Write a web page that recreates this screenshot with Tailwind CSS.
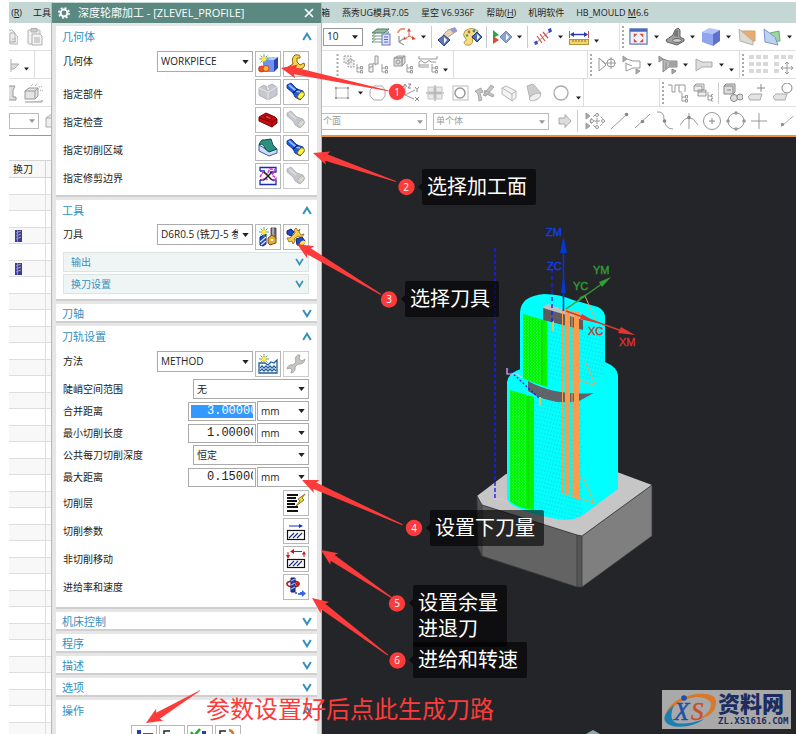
<!DOCTYPE html>
<html lang="zh-CN">
<head>
<meta charset="utf-8">
<title>深度轮廓加工</title>
<script src="https://cdn.jsdelivr.net/npm/@tailwindcss/browser@4"></script>
</head>
<body class="relative h-screen overflow-hidden bg-white font-['Open_Sans','Noto_Sans_CJK_SC',sans-serif] text-[10px] text-[#222]">

<svg class="hidden" aria-hidden="true">
  <symbol id="caret" viewBox="0 0 8 5"><path d="M0 0H8L4 5z" fill="currentColor"/></symbol>
  <symbol id="up" viewBox="0 0 10 9"><path d="M1.2 8L5 1.8L8.800 8" fill="none" stroke="#3290bd" stroke-width="2"/></symbol>
  <symbol id="down" viewBox="0 0 10 9"><path d="M1.200 1L5 7.200L8.800 1" fill="none" stroke="#3290bd" stroke-width="2"/></symbol>
  <symbol id="grip" viewBox="0 0 4 22"><path d="M2 0V22" stroke="#aaa" stroke-width="2" stroke-dasharray="2 2"/></symbol>
  <symbol id="torch" viewBox="0 0 20 20"><path d="M1 3L5 1L11 7L17 9L18 14L14 18L9 15L7 11L1 6z" fill="#1f5ae0" stroke="#0a1f88" stroke-width=".8"/><path d="M3 3L10 9L14 10" fill="none" stroke="#8fc0ff" stroke-width="1.800"/><path d="M7 11L12 7" stroke="#061a66" stroke-width="1.200"/><ellipse cx="15" cy="13.500" rx="2.600" ry="4.200" transform="rotate(40 15 13.5)" fill="#fff04a" stroke="#6a6a10" stroke-width=".8"/></symbol>
  <symbol id="torch-off" viewBox="0 0 20 20"><path d="M1 3L5 1L11 7L17 9L18 14L14 18L9 15L7 11L1 6z" fill="#c3c6cd" stroke="#b0b3ba" stroke-width=".8"/><path d="M3 3L10 9" stroke="#dfe1e4" stroke-width="1.500"/><ellipse cx="15" cy="13.500" rx="2.600" ry="4.200" transform="rotate(40 15 13.5)" fill="#d8d8ce" stroke="#aaa" stroke-width=".8"/></symbol>
  <symbol id="spark" viewBox="0 0 10 10"><path d="M5 0V10M0 5H10M1.500 1.500L8.500 8.500M8.500 1.500L1.500 8.500" stroke="#4a9c9c" stroke-width=".9"/><circle cx="5" cy="5" r="2.400" fill="#fff04a" stroke="#d8b820" stroke-width=".6"/></symbol>
  <symbol id="tree" viewBox="0 0 7 10"><path d="M1 0V8H4M1 4H4" fill="none" stroke="#999"/><path d="M4.500 2.500H6.500V5H4.500zM4.500 6.500H6.500V9H4.500z" fill="none" stroke="#999"/></symbol>
</svg>

<div class="ml-[9px] flex h-full flex-col pt-[2px]">
  <nav class="flex h-[21px] shrink-0 items-center bg-[#c5d7d5] text-[9px] whitespace-nowrap">
    <div class="flex w-[312px] shrink-0 gap-[11px]"><a href="#" class="w-[13px] text-right">(<u>R</u>)</a><a href="#">工具(<u>T</u>)</a></div>
    <div class="flex flex-1 gap-[12px]">
      <a href="#">箱</a><a href="#">燕秀UG模具7.05</a><a href="#">星空 V6.936F</a><a href="#">帮助(<u>H</u>)</a><a href="#">机明软件</a><a href="#">HB_MOULD <u>M</u>6.6</a>
    </div>
  </nav>

  <!-- standard toolbar -->
  <div class="flex h-[28px] shrink-0 items-center border-b border-[#dedede]">
    <div class="flex w-[314px] shrink-0 items-center gap-[8px]">
      <button aria-label="复制" class="w-[9px]"><svg class="h-5 w-[9px]" viewBox="0 0 9 20" fill="#eee" stroke="#b5b5b5"><path d="M0 3H3L6 6V15H0M1 6H5L9 10V17H1z"/><path d="M3 12H7M3 14.500H7"/></svg></button>
      <button aria-label="粘贴"><svg class="h-5 w-5" viewBox="0 0 20 20" fill="#f2f2f2" stroke="#b0b0b0"><rect x="2" y="3" width="12" height="14" rx="1"/><path d="M5 1.500H11V5H5z" fill="#ccc"/><path d="M6 7H14L16 9V18H6z"/><path d="M8 11H14M8 13H14M8 15H14"/></svg></button>
    </div>
    <div class="relative w-[40px] shrink-0"><select aria-label="数值" class="h-[18px] w-full appearance-none border border-[#999] bg-white pl-[3px] text-[10px]"><option>10</option></select><svg class="pointer-events-none absolute top-[7px] right-[5px] h-[4px] w-[6px]"><use href="#caret"/></svg></div>
    <button aria-label="图层" class="ml-[5px] flex w-[25px] justify-center"><svg class="h-5 w-5" viewBox="0 0 20 20"><g fill="#fff" stroke="#719b80"><path d="M1 15L6 11H18L13 15z"/><path d="M1 12L6 8H18L13 12z"/><path d="M1 9L6 5H18L13 9z"/></g><path d="M1 6L6 2H18L13 6z" fill="#94b79e" stroke="#4f7f60"/><rect x="11" y="7" width="8" height="11" fill="#dce2ff" stroke="#6a73c8"/><path d="M13 10H17M13 12.500H17M13 15H17" stroke="#5a63b8"/></svg></button>
    <button aria-label="坐标系" class="flex w-[25px] justify-center"><svg class="h-5 w-5" viewBox="0 0 20 20" fill="none"><path d="M2 6Q3 1 9 2" stroke="#e89070" stroke-width="1.800"/><path d="M13 4V9L17 11M13 9L9 12" stroke="#d86048"/><path d="M13 1L11 4.500H15zM20 12L16 9V13zM7 13L8 9.500L11 12z" fill="#dc5038"/><path d="M3 9V15L8 18M3 15L7 12" stroke="#999" stroke-width="1.300"/></svg></button>
    <button aria-label="更多" class="flex w-[11px] justify-center"><svg class="h-[4px] w-[5px]"><use href="#caret"/></svg></button>
    <i class="mx-[2px] h-[22px] w-px bg-[#ccc]"></i>
    <button aria-label="编辑显示" class="flex w-[25px] justify-center"><svg class="h-5 w-5" viewBox="0 0 20 20"><path d="M6 8L11 3L18 1L20 4L14 8L10 11z" fill="#ecd2b4" stroke="#a98c6c" stroke-width=".8"/><path d="M13 2L18 0L20 4L16 6z" fill="#8f9bdc"/><path d="M1 13L7 8L13 13L7 19z" fill="#5c78b8" stroke="#2f4880"/><path d="M7 10L10 13L7 16.500z" fill="#fff"/></svg></button>
    <button aria-label="调色板" class="flex w-[25px] justify-center"><svg class="h-5 w-5" viewBox="0 0 20 20"><path d="M3 4Q10-1 16 4Q16 8 10 9Q12 16 8 18Q2 19 2 15Q6 13 3 11Q0 8 3 4z" fill="#f6dc85" stroke="#b8983c"/><circle cx="7" cy="5" r="1.400" fill="#c63"/><circle cx="12" cy="4" r="1.400" fill="#38a"/><circle cx="5" cy="8.500" r="1.300" fill="#4a5"/><path d="M10 10L15 5L20 10L15 15z" fill="#5370b3" stroke="#22396c"/><path d="M15 7L18 10L15 13z" fill="#fff"/></svg></button>
    <i class="mx-[2px] h-[22px] w-px bg-[#ccc]"></i>
    <button aria-label="显示隐藏" class="flex w-[25px] justify-center"><svg class="h-5 w-5" viewBox="0 0 20 20"><path d="M1 3L7 8L1 11z" fill="#2aa84a"/><path d="M1 9L7 13L1 17z" fill="#d05030"/><path d="M8 10L14 4L20 10L14 16z" fill="#8aa4d2" stroke="#7088b4"/><path d="M14 6.500L17 10L14 13.500z" fill="#fff"/></svg></button>
    <button aria-label="更多" class="flex w-[11px] justify-center"><svg class="h-[4px] w-[5px]"><use href="#caret"/></svg></button>
    <i class="mx-[2px] h-[22px] w-px bg-[#ccc]"></i>
    <button aria-label="测量距离" class="flex w-[25px] justify-center"><svg class="h-5 w-5" viewBox="0 0 20 20" fill="none"><path d="M3 16L17 4" stroke="#999"/><path d="M4 9L9 16M7 7L12 14M10 5L15 11" stroke="#d84848" stroke-width="1.200"/><path d="M1 15L4 13.500L5 17L2 18zM15 2L18 1L19 4.500L16 6z" fill="#3c49c0"/></svg></button>
    <button aria-label="更多" class="flex w-[11px] justify-center"><svg class="h-[4px] w-[5px]"><use href="#caret"/></svg></button>
    <button aria-label="标尺" class="flex w-[25px] justify-center"><svg class="h-5 w-5" viewBox="0 0 20 20"><path d="M.500 4V11M19.500 4V11" stroke="#b55"/><path d="M2 7.500H18" stroke="#2238b8" stroke-width="1.400"/><path d="M1 7.500L5 5V10zM19 7.500L15 5V10z" fill="#2238b8"/><rect x=".5" y="12.500" width="19" height="5" fill="#f2d768" stroke="#b09540"/><path d="M4 13V15M7 13V15M10 13V15M13 13V15M16 13V15" stroke="#85702a"/></svg></button>
    <button aria-label="更多" class="flex w-[11px] justify-center pt-[8px]"><svg class="h-[4px] w-[5px]"><use href="#caret"/></svg></button>
    <div class="ml-[17px] flex h-[27px] items-center border-l border-[#e2e2e2]">
      <svg class="h-[22px] w-[6px]"><use href="#grip"/></svg>
      <button aria-label="适合窗口" class="flex w-[25px] justify-center"><svg class="h-[19px] w-[19px]" viewBox="0 0 20 20"><rect x="1" y="2" width="18" height="16" fill="#eef3ff" stroke="#5b78c0" stroke-width="1.300"/><path d="M1 3.500H19" stroke="#4a6abc" stroke-width="3"/><path d="M5 7H9L5 11zM15 7H11L15 11zM5 16H9L5 12zM15 16H11L15 12z" fill="#e5482e"/></svg></button>
      <button aria-label="更多" class="flex w-[11px] justify-center"><svg class="h-[4px] w-[5px]"><use href="#caret"/></svg></button>
      <button aria-label="视图" class="flex w-[25px] justify-center"><svg class="h-5 w-5" viewBox="0 0 20 20"><path d="M1 13L8 8L10 3L13 1L15 3V10L19 12V14L12 18L2 15z" fill="#a0a0a0" stroke="#606060"/><path d="M10 4L13 3V10L9 9z" fill="#777"/><ellipse cx="12" cy="13.500" rx="4.500" ry="2" fill="#ccc" stroke="#666"/></svg></button>
      <button aria-label="更多" class="flex w-[11px] justify-center"><svg class="h-[4px] w-[5px]"><use href="#caret"/></svg></button>
      <button aria-label="着色" class="flex w-[25px] justify-center"><svg class="h-5 w-5" viewBox="0 0 20 20"><path d="M1 5L8 1L19 3L12 7z" fill="#b4c4fa"/><path d="M1 5L12 7V19L1 15z" fill="#8fa5ee"/><path d="M12 7L19 3V14L12 19z" fill="#5c72cc"/></svg></button>
      <button aria-label="更多" class="flex w-[11px] justify-center"><svg class="h-[4px] w-[5px]"><use href="#caret"/></svg></button>
      <button aria-label="截面" class="flex w-[25px] justify-center"><svg class="h-5 w-5" viewBox="0 0 20 20"><path d="M4 4L18 4V14H9z" fill="#e8ab70" stroke="#d0a070"/><path d="M2 2L16 14V18L3 14z" fill="#dddad4" stroke="#b5b2aa"/></svg></button>
      <button aria-label="剪切" class="flex w-[25px] justify-center"><svg class="h-5 w-5" viewBox="0 0 20 20"><path d="M8 6L17 4L18 14L9 15z" fill="#9ed69e" stroke="#69ac6f"/><path d="M2 2L13 10L16 18L3 15z" fill="#bdd2f0" stroke="#7a98c8"/></svg></button>
      <button aria-label="更多" class="flex w-[11px] justify-center"><svg class="h-[4px] w-[5px]"><use href="#caret"/></svg></button>
    </div>
  </div>

  <!-- navigator and view toolbar -->
  <div class="flex h-[28px] shrink-0 items-center border-b border-[#dedede]">
    <div class="flex w-[326px] shrink-0 items-center"><div class="flex h-[27px] w-[26px] items-center border-r border-[#ddd]"><svg class="h-5 w-[12px]" viewBox="0 0 12 20"><path d="M2 4V17M2 9H10L5 14H2" fill="#ddd" stroke="#aaa"/></svg><svg class="mt-[8px] ml-[3px] h-[4px] w-[5px]"><use href="#caret"/></svg></div></div>
    <svg class="h-[22px] w-[6px]"><use href="#grip"/></svg>
    <div class="flex h-[27px] items-center border-r border-[#ddd] pr-[2px]">
      <button aria-label="程序顺序" class="flex w-[25px] justify-center"><svg class="h-5 w-5" viewBox="0 0 20 20" fill="#eee" stroke="#999"><path d="M1 1H8V8H1zM5 5H11V12H5z" stroke-dasharray="2 1"/><use href="#tree" x="13" y="9" width="7" height="10"/></svg></button>
      <button aria-label="机床" class="flex w-[25px] justify-center"><svg class="h-5 w-5" viewBox="0 0 20 20" fill="#eee" stroke="#999"><path d="M7 1H10V9H7zM1 9H5V17H1zM1 13L5 11M5 8L8 10"/><use href="#tree" x="13" y="9" width="7" height="10"/></svg></button>
      <button aria-label="几何" class="flex w-[25px] justify-center"><svg class="h-5 w-5" viewBox="0 0 20 20" fill="#ddd" stroke="#999"><path d="M1 3L5 1H12L9 3zM1 3H9V11H1zM9 3L12 1V8L9 11z"/><circle cx="5" cy="7" r="2"/><use href="#tree" x="13" y="9" width="7" height="10"/></svg></button>
      <button aria-label="加工方法" class="flex w-[25px] justify-center"><svg class="h-5 w-5" viewBox="0 0 20 20" fill="none" stroke="#999"><path d="M1 1V4H19V1M1 7Q3 4 5 7Q7 9 9 7Q11 4 13 7H18M1 7V12H11M1 10H11"/><use href="#tree" x="13" y="9" width="7" height="10"/></svg></button>
      <button aria-label="更多" class="flex w-[11px] justify-center pt-[10px]"><svg class="h-[4px] w-[5px]"><use href="#caret"/></svg></button>
    </div>
    <div class="ml-[133px] flex h-[27px] items-center border-l border-[#ddd]">
      <svg class="h-[22px] w-[6px]"><use href="#grip"/></svg>
      <button aria-label="曲线" class="flex w-[25px] justify-center"><svg class="h-5 w-5" viewBox="0 0 20 20" fill="none" stroke="#999"><path d="M2 3V16L9 10zM2 3L9 9"/><circle cx="14" cy="8" r="4"/><path d="M14 2V14M9 8H19"/></svg></button>
      <button aria-label="放样" class="flex w-[25px] justify-center"><svg class="h-5 w-5" viewBox="0 0 20 20" fill="none" stroke="#999"><path d="M1 1L5 4L1 7z" fill="#aaa"/><path d="M3 8L10 11M5 4L11 6H18V13H11L4 16V9"/><path d="M14 14L18 16L14 19z" fill="#aaa"/></svg></button>
      <button aria-label="更多" class="flex w-[11px] justify-center"><svg class="h-[4px] w-[5px]"><use href="#caret"/></svg></button>
      <button aria-label="扫掠" class="flex w-[25px] justify-center"><svg class="h-5 w-5" viewBox="0 0 20 20" fill="none" stroke="#888"><path d="M1 1L5 4L1 7z" fill="#aaa"/><path d="M5 4L11 6H19V12H11L5 17z" fill="#bbb"/><path d="M8 7V14M11 8H18M11 10H18"/><path d="M14 14L18 16L14 19z" fill="#aaa"/></svg></button>
      <button aria-label="更多" class="flex w-[11px] justify-center"><svg class="h-[4px] w-[5px]"><use href="#caret"/></svg></button>
      <button aria-label="管道" class="flex w-[25px] justify-center"><svg class="h-5 w-5" viewBox="0 0 20 20" fill="#ddd" stroke="#aaa"><path d="M2 4L8 7H18V12H8L2 16z"/></svg></button>
      <button aria-label="更多" class="flex w-[11px] justify-center"><svg class="h-[4px] w-[5px]"><use href="#caret"/></svg></button>
      <button aria-label="工具条选项" class="flex w-[8px] justify-center pt-[10px]"><svg class="h-[4px] w-[5px]"><use href="#caret"/></svg></button>
    </div>
    <div class="ml-[4px] flex h-[27px] items-center border-l border-[#ddd]">
      <svg class="h-[22px] w-[6px]"><use href="#grip"/></svg>
      <button aria-label="阵列" class="flex w-[25px] justify-center"><svg class="h-5 w-5" viewBox="0 0 20 20" fill="#d9d9d9"><path d="M0 0H5V4H0zM7 0H12V4H7zM14 0H19V4H14zM0 7H5V11H0zM7 7H12V11H7zM14 7H19V11H14zM0 14H5V18H0zM7 14H12V18H7zM14 14H19V18H14z"/></svg></button>
      <button aria-label="移动" class="flex w-[25px] justify-center"><svg class="h-5 w-5" viewBox="0 0 20 20"><path d="M0 0H5V4H0zM7 0H12V4H7zM14 0H19V4H14zM0 7H5V11H0zM0 14H5V18H0z" fill="#d9d9d9"/><path d="M13 7V19M7 13H19M11 9L13 7L15 9M11 17L13 19L15 17M9 11L7 13L9 15M17 11L19 13L17 15" fill="none" stroke="#999"/></svg></button>
    </div>
  </div>

  <!-- sketch toolbar -->
  <div class="flex h-[28px] shrink-0 items-center border-b border-[#dedede]">
    <div class="flex w-[321px] shrink-0 items-center gap-[5px]">
      <svg class="h-5 w-[9px]" viewBox="0 0 9 20" fill="#ddd" stroke="#999"><path d="M0 3H6L4 7V14H7V17H0"/></svg>
      <svg class="h-[22px] w-[22px]" viewBox="0 0 22 22" fill="#e4e4e4" stroke="#999"><path d="M2 9L6 6H15V14L12 17H2zM2 9H12V17M12 9L15 6"/><path d="M8 4L10 2M12 4L15 1M16 5L20 4M17 8L20 9" stroke-dasharray="1 1"/><path d="M2 20H19V18"/></svg>
    </div>
    <button aria-label="矩形" class="flex w-[25px] justify-center"><svg class="h-5 w-5" viewBox="0 0 20 20"><path d="M4 5H16V15H4z" fill="none" stroke="#aaa"/><path d="M3 4H5V6H3zM15 4H17V6H15zM3 14H5V16H3zM15 14H17V16H15z" fill="#999"/></svg></button>
    <button aria-label="更多" class="flex w-[11px] justify-center"><svg class="h-[4px] w-[5px]"><use href="#caret"/></svg></button>
    <button aria-label="多边形" class="flex w-[25px] justify-center"><svg class="h-5 w-5" viewBox="0 0 20 20"><path d="M6 3H14L17 7V13L14 17H6L2 13V7z" fill="none" stroke="#aaa"/></svg></button>
    <button aria-label="基准坐标系" class="ml-[8px] flex w-[25px] justify-center"><svg class="h-5 w-5" viewBox="0 0 20 20" fill="none" stroke="#999"><path d="M4 1V12L14 7M4 12L13 16M2 4L4 1L6 4"/><path d="M7 1H10L7 5H10M14 4L16 6.500L18 4M16 6.500V9M14 14L18 18M18 14L14 18" stroke="#888"/></svg></button>
    <button aria-label="网格" class="flex w-[25px] justify-center"><svg class="h-5 w-5" viewBox="0 0 20 20" fill="#e9e9e9" stroke="#c4c4c4"><path d="M3 4H9V9H3zM11 4H17V9H11zM3 11H9V16H3zM11 11H17V16H11z"/><path d="M10 2V18M1 10H19" stroke="#999"/></svg></button>
    <button aria-label="孔" class="flex w-[25px] justify-center"><svg class="h-5 w-5" viewBox="0 0 20 20" fill="none" stroke="#999"><rect x="3" y="3" width="15" height="14" stroke="#bbb"/><circle cx="10" cy="10" r="5" stroke-width="1.500"/></svg></button>
    <button aria-label="工具" class="flex w-[25px] justify-center"><svg class="h-5 w-5" viewBox="0 0 20 20" fill="#c4c4c4" stroke="#aaa"><path d="M0 8L6 5L8 9L5 10L7 17L4 18L3 11zM8 12L16 2L19 4L11 13zM10 7L19 12L18 14L9 10z"/></svg></button>
    <button aria-label="块" class="flex w-[25px] justify-center"><svg class="h-5 w-5" viewBox="0 0 20 20" fill="#f4f4f4" stroke="#b5b5b5"><path d="M3 5L7 3L17 8V15L13 18L3 11zM3 5L13 11V18M13 11L17 8"/></svg></button>
    <button aria-label="灯光" class="flex w-[25px] justify-center"><svg class="h-5 w-5" viewBox="0 0 20 20" fill="#ccc" stroke="#b5b5b5"><path d="M3 3L9 1L17 10Q15 15 6 16z"/><ellipse cx="11" cy="14" rx="6" ry="3" transform="rotate(-25 11 14)" fill="#eee"/></svg></button>
    <button aria-label="圆" class="flex w-[25px] justify-center"><svg class="h-5 w-5" viewBox="0 0 20 20"><circle cx="12" cy="10" r="7" fill="none" stroke="#aaa" stroke-width="1.300"/></svg></button>
    <div class="flex h-[27px] w-[13px] items-center border-r border-[#ddd] pt-[10px] pl-[5px]"><svg class="h-[4px] w-[5px]"><use href="#caret"/></svg></div>
    <div class="ml-[75px] flex h-[27px] items-center border-l border-[#ddd]">
      <svg class="h-[22px] w-[6px]"><use href="#grip"/></svg>
      <button aria-label="工序导航" class="flex w-[25px] justify-center"><svg class="h-5 w-5" viewBox="0 0 20 20" fill="none" stroke="#999"><path d="M0 2H4V9H7V2H11V9H14M11 2H17V9"/><use href="#tree" x="13" y="10" width="7" height="10"/></svg></button>
      <button aria-label="装配" class="flex w-[25px] justify-center"><svg class="h-5 w-5" viewBox="0 0 20 20" fill="#eee" stroke="#999"><path d="M1 3L3 1H11V6L9 8H1zM1 3H9V8M5 7H13V13H5zM5 9H13"/><use href="#tree" x="14" y="9" width="7" height="10"/></svg></button>
      <i class="mx-[2px] h-[22px] w-px bg-[#ccc]"></i>
      <button aria-label="查找" class="flex w-[25px] justify-center"><svg class="h-5 w-5" viewBox="0 0 20 20" fill="#ddd" stroke="#888"><path d="M1 3L3 1H12V9L10 11H1zM1 3H10V11"/><circle cx="11" cy="15" r="3.500"/><circle cx="17" cy="14" r="3"/><path d="M4 7H8"/></svg></button>
      <button aria-label="添加" class="flex w-[25px] justify-center"><svg class="h-5 w-5" viewBox="0 0 20 20" fill="#e4e4e4" stroke="#aaa"><path d="M0 14L3 11H14L12 17H2z"/><path d="M13 1V9M9 5H17" stroke="#888"/></svg></button>
      <button aria-label="检查" class="flex w-[25px] justify-center"><svg class="h-5 w-5" viewBox="0 0 20 20" fill="#e4e4e4" stroke="#aaa"><path d="M0 14L3 11H14L12 17H2z"/><circle cx="14" cy="5" r="5" fill="#fff" stroke="#888"/></svg></button>
    </div>
  </div>

  <!-- selection bar -->
  <div class="flex h-[28px] shrink-0 items-center text-[#999]">
    <div class="relative flex w-[312px] shrink-0 items-center gap-[6px]">
      <div class="relative w-[30px]"><select aria-label="类型" class="h-[16px] w-full appearance-none border border-[#bbb]"><option></option></select><svg class="pointer-events-none absolute top-[6px] right-[4px] h-[4px] w-[6px]"><use href="#caret"/></svg></div>
      <svg class="h-4 w-4" viewBox="0 0 16 16" fill="#eee" stroke="#aaa"><path d="M1 5L5 2H12V11L9 14H1zM1 5H9V14"/></svg>
    </div>
    <div class="relative w-[106px] shrink-0"><select aria-label="面规则" class="h-[17px] w-full appearance-none border border-[#bbb] pl-[1px] text-[9px]"><option>个面</option></select><svg class="pointer-events-none absolute top-[7px] right-[4px] h-[4px] w-[6px]"><use href="#caret"/></svg></div>
    <div class="relative ml-[6px] w-[116px] shrink-0"><select aria-label="体规则" class="h-[17px] w-full appearance-none border border-[#bbb] pl-[2px] text-[9px]"><option>单个体</option></select><svg class="pointer-events-none absolute top-[7px] right-[4px] h-[4px] w-[6px]"><use href="#caret"/></svg></div>
    <button aria-label="下一步" class="ml-[4px] flex w-[25px] justify-center"><svg class="h-5 w-5" viewBox="0 0 20 20"><path d="M4 7H10V3.500L16 10L10 16.500V13H4z" fill="#ddd" stroke="#aaa"/></svg></button>
    <i class="mr-[5px] ml-px h-[22px] w-px bg-[#ccc]"></i>
    <button aria-label="捕捉点" class="flex w-[25px] justify-center"><svg class="h-5 w-5" viewBox="0 0 20 20" fill="none" stroke="#999"><path d="M1 2L5 5L1 8zM1 12L5 15L1 18z" fill="#aaa"/><path d="M12 2L20 10L12 18L4 10z" stroke-dasharray="3 2"/><circle cx="12" cy="4" r="1.500"/><circle cx="12" cy="16" r="1.500"/><circle cx="18" cy="10" r="1.500"/><circle cx="7" cy="10" r="1.500"/><path d="M12 7V13M9 10H15"/></svg></button>
    <button aria-label="端点" class="flex w-[25px] justify-center"><svg class="h-5 w-5" viewBox="0 0 20 20"><path d="M2 18L17 4" stroke="#999"/><circle cx="17.500" cy="3.500" r="1.800" fill="#888"/></svg></button>
    <button aria-label="中点" class="flex w-[25px] justify-center"><svg class="h-5 w-5" viewBox="0 0 20 20"><path d="M3 17L18 3" stroke="#999"/><circle cx="10.500" cy="10.500" r="1.800" fill="#888"/></svg></button>
    <button aria-label="控制点" class="flex w-[25px] justify-center"><svg class="h-5 w-5" viewBox="0 0 20 20"><path d="M2 1Q9 0 9 8Q10 18 18 18" fill="none" stroke="#999"/><circle cx="9.500" cy="10" r="1.800" fill="#888"/></svg></button>
    <button aria-label="交点" class="flex w-[25px] justify-center"><svg class="h-5 w-5" viewBox="0 0 20 20"><path d="M1 14Q10-1 19 14M10 2V18" fill="none" stroke="#999"/><circle cx="10" cy="6.500" r="1.800" fill="#888"/></svg></button>
    <button aria-label="圆心" class="flex w-[25px] justify-center"><svg class="h-5 w-5" viewBox="0 0 20 20"><circle cx="10" cy="10" r="8.500" fill="none" stroke="#999"/><path d="M10 7V13M7 10H13" stroke="#888"/></svg></button>
    <button aria-label="象限点" class="flex w-[25px] justify-center"><svg class="h-5 w-5" viewBox="0 0 20 20" fill="#999"><circle cx="10" cy="10" r="8" fill="none" stroke="#999"/><circle cx="10" cy="2" r="1.800"/><circle cx="10" cy="18" r="1.800"/><circle cx="2" cy="10" r="1.800"/><circle cx="18" cy="10" r="1.800"/></svg></button>
    <button aria-label="现有点" class="flex w-[25px] justify-center"><svg class="h-5 w-5" viewBox="0 0 20 20"><path d="M10 2V18M2 10H18" stroke="#999"/></svg></button>
    <button aria-label="曲线上的点" class="flex w-[25px] justify-center pl-[8px]"><svg class="h-5 w-5" viewBox="0 0 20 20"><path d="M2 17L17 4" stroke="#999"/><circle cx="4" cy="14" r="1.800" fill="#888"/></svg></button>
  </div>

  <div class="flex min-h-0 flex-1">
    <div class="w-[312px] shrink-0 overflow-hidden border-t border-[#999] pt-[24px]">
      <table class="w-full table-fixed border-collapse">
        <colgroup><col class="w-[36px]"><col></colgroup>
        <thead><tr class="h-[17px] border-y border-[#d5d5d5] bg-[#f7f7f7]"><th class="border-r border-[#d5d5d5] pl-[4px] text-left font-normal leading-[15px]">换刀</th><th></th></tr></thead>
        <tbody id="ops"></tbody>
      </table>
    </div>
    <main class="min-w-0 flex-1 overflow-hidden border-t-2 border-[#e8923c] bg-[#242529]">
      <svg class="h-[597px] w-[475px]" viewBox="321 137 475 597" role="img" aria-label="零件模型">
        <defs>
          <pattern id="dots" width="3" height="4" patternUnits="userSpaceOnUse" patternTransform="rotate(14)"><path d="M0 1H1.200" stroke="#35a5ad" stroke-width=".7"/></pattern>
          <pattern id="mesh" width="3" height="3" patternUnits="userSpaceOnUse"><path d="M0 1H1M2 2.500H3" stroke="#43f76f" stroke-width=".8"/></pattern>
        </defs>
        <path d="M477 496L506 474L617 472L652 485L582 536L577 535L482 505z" fill="#c6c6c6"/>
        <path d="M477 496L482 505V556L478 547z" fill="#505050"/>
        <path d="M482 505L577 535V587L482 556z" fill="#636363"/>
        <path d="M577 535L582 536V587L577 587z" fill="#555"/>
        <path d="M582 536L652 485V536L582 587z" fill="#7f7f7f"/>
        <path d="M477 496L482 505L577 535L582 536L652 485V536L582 587H577L482 556L478 547zM482 505V556M577 535V587M582 536V587" fill="none" stroke="#3b3b3b" stroke-width=".8"/>
        <path d="M507 382Q508 373 521 369L605 362Q617 367 618 375V489L583 515Q570 523 552 518Q512 510 507 499z" fill="#0ff"/>
        <path d="M520 312Q521 296 544 294Q560 294 573 300L598 307Q606 311 605 319V378Q585 400 520 376z" fill="#0ff"/>
        <path d="M547 325H604V376Q570 386 547 378zM534 397Q560 408 582 398V519Q560 521 534 512z" fill="url(#dots)"/>
        <path d="M523 314L547 321V387Q531 382 523 378zM510 390L534 397V510Q517 508 510 501z" fill="#00f500"/>
        <path d="M523 314L541 320V385L523 378zM510 390L528 395V508L510 501z" fill="url(#mesh)"/>
        <path d="M542 321V385M528 396V508" stroke="#14d814" stroke-width="1.500"/>
        <path d="M543 307L548 304L583 317V321L543 309z" fill="#bfc0c2"/>
        <path d="M543 308L583 320V330L543 320z" fill="#5d5d5d"/>
        <path d="M528 381Q555 396 594 393L579 401Q550 406 528 391z" fill="#606468"/>
        <path d="M553 321V331M540 397V405" stroke="#d8c860" stroke-width="2"/>
        <g stroke="#1c1cff" stroke-width="1.400" fill="none"><path d="M495 248V500" stroke-dasharray="4 2"/><path d="M552 262V322" stroke-dasharray="4 3"/><path d="M508 369L539 398" stroke-dasharray="2 2"/></g>
        <path d="M507 368V374H517L522 378M493 499H501L508 502" fill="none" stroke="#dcc4dc" stroke-width="1.200"/>
        <g fill="#fb9c4c"><path d="M565 310H570V494H565zM574 312H579V500L574 498zM562 309H563V493H562zM571.500 310H572.500V496H571.500z"/></g>
        <path d="M566 309L585 296L597 323M579 367L585 361L596 386L579 380M574 484L583 477L594 503L562 493" fill="none" stroke="#f2a260"/>
        <path d="M563.500 311V240" stroke="#0c35c8" stroke-width="1.600"/><path d="M563.500 237L560 253H567zM563.500 274L561 293H566z" fill="#0636d4"/>
        <path d="M566 309L606 281" stroke="#2f9e35" stroke-width="1.300"/><path d="M611 277L602 287L599 282zM589 293L577 303L580 297z" fill="#2f9e35"/>
        <path d="M566 311L622 331" stroke="#dc3730" stroke-width="1.400"/><path d="M635 335L618 333L621 327zM597 323L580 319L582 314z" fill="#e03530"/>
        <g class="font-['Liberation_Sans',sans-serif]" font-size="11" stroke-width=".4"><g fill="#103ee8" stroke="#103ee8"><text x="546" y="236">ZM</text><text x="547" y="270">ZC</text></g><g fill="#2f9e35" stroke="#2f9e35"><text x="593" y="274">YM</text><text x="573" y="290">YC</text></g><g fill="#d9302c" stroke="#d9302c"><text x="619" y="346">XM</text><text x="588" y="335">XC</text></g></g>
        <path d="M586 734L593 730L600 734z" fill="#93a5ab"/>
      </svg>
    </main>
  </div>
</div>

<!-- operation dialog -->
<section role="dialog" aria-label="深度轮廓加工" class="absolute top-[3px] bottom-0 left-[51px] flex w-[271px] flex-col overflow-hidden border-r border-l border-[#b5b5b5] bg-[#e6e6e6]">
  <header class="flex h-[20px] shrink-0 items-center bg-[#5b8982] pl-[6px] text-[11px] text-white">
    <svg class="h-[12px] w-[12px]" viewBox="0 0 12 12" fill="none" stroke="#fff"><circle cx="6" cy="6" r="3.400" stroke-width="2"/><circle cx="6" cy="6" r="5.100" stroke-width="1.600" stroke-dasharray="2 2"/></svg>
    <h1 class="ml-[8px] flex-1 whitespace-nowrap">深度轮廓加工 - [ZLEVEL_PROFILE]</h1>
    <button aria-label="关闭" class="mr-[7px]"><svg class="h-[10px] w-[10px]" viewBox="0 0 10 10"><path d="M1 1L9 9M9 1L1 9" stroke="#fff" stroke-width="1.700"/></svg></button>
  </header>
  <div class="flex flex-col gap-[3px] px-[4px] pt-[3px]">
    <section class="border-b-2 border-[#cfcfcf] bg-white pb-[6px]">
      <button class="flex h-[25px] w-full items-start justify-between pt-[2px] pr-[5px] pl-[6px] text-[11px] leading-[17px] text-[#3290bd]">几何体<svg class="mt-[4px] h-[9px] w-[10px]"><use href="#up"/></svg></button>
      <div class="grid gap-[2px] pr-[8px] pl-[7px]">
        <div class="flex h-[26px] items-start gap-[2px]"><label for="geo" class="flex-1 leading-[20px]">几何体</label>
          <div class="relative w-[96px]"><select id="geo" class="h-[21px] w-full appearance-none border border-[#aaa] bg-white pl-[3px]"><option>WORKPIECE</option></select><svg class="pointer-events-none absolute top-[9px] right-[4px] h-[4px] w-[7px]"><use href="#caret"/></svg></div>
          <button aria-label="新建几何体" class="flex h-[26px] w-[26px] items-center justify-center border border-[#b8b8b8] bg-white"><svg class="h-5 w-5" viewBox="0 0 20 20"><path d="M5 6L9 3H20L16 6z" fill="#b4c8ff"/><path d="M5 6H16V18H5z" fill="#6f92f0"/><path d="M16 6L20 3V14L16 18z" fill="#2946b0"/><use href="#spark" x="1" y="0" width="10" height="10"/><circle cx="3.500" cy="15" r="3" fill="#f25022" stroke="#a02010" stroke-width=".6"/><circle cx="8" cy="14.500" r="3" fill="#ffb04a" stroke="#d04a10"/></svg></button>
          <button aria-label="编辑几何体" class="flex h-[26px] w-[26px] items-center justify-center border border-[#b8b8b8] bg-white"><svg class="h-5 w-5" viewBox="0 0 20 20"><path d="M9 1Q15 0 14 4L11 4L11 8L14 11L18 9Q20 13 15 15Q11 16 9 13L5 16Q2 17 1 15L2 13L7 10Q5 4 9 1z" fill="#f7d348" stroke="#8a6415"/></svg></button></div>
        <div class="flex h-[26px] items-center gap-[2px]"><span class="flex-1 pt-[4px]">指定部件</span>
          <button aria-label="选择部件" class="flex h-[26px] w-[26px] items-center justify-center border border-[#b8b8b8] bg-white"><svg class="h-5 w-5" viewBox="0 0 20 20"><path d="M1 6L6 3L9 5V9L12 7L10 4L14 2L19 5V13L10 18L1 13z" fill="#c5c8ce" stroke="#b0b3ba"/><path d="M10 10V18M1 6L10 10L19 5" fill="none" stroke="#e4e6ea"/></svg></button>
          <button aria-label="显示部件" class="flex h-[26px] w-[26px] items-center justify-center border border-[#b8b8b8] bg-white"><svg class="h-5 w-5"><use href="#torch"/></svg></button></div>
        <div class="flex h-[26px] items-center gap-[2px]"><span class="flex-1 pt-[4px]">指定检查</span>
          <button aria-label="选择检查" class="flex h-[26px] w-[26px] items-center justify-center border border-[#b8b8b8] bg-white"><svg class="h-5 w-5" viewBox="0 0 20 20"><path d="M1 7L8 3L17 7L19 9V13L14 17L1 11z" fill="#c20e12" stroke="#700"/><path d="M1 8L14 12L19 9M14 12V17" fill="none" stroke="#800"/><path d="M6 7L9 5.500L14 8L12 9.500z" fill="#f05048" stroke="#800"/></svg></button>
          <button aria-label="显示检查" class="flex h-[26px] w-[26px] items-center justify-center border border-[#ccc] bg-white"><svg class="h-5 w-5"><use href="#torch-off"/></svg></button></div>
        <div class="flex h-[26px] items-center gap-[2px]"><span class="flex-1 pt-[4px]">指定切削区域</span>
          <button aria-label="选择切削区域" class="flex h-[26px] w-[26px] items-center justify-center border border-[#b8b8b8] bg-white"><svg class="h-5 w-5" viewBox="0 0 20 20"><path d="M1 7V13L11 18L19 15V11L11 13z" fill="#cfdcf8" stroke="#3a5aa8"/><path d="M1 7Q3 1 6 2L13 1Q14 8 19 11L11 14Q7 12 6 8Q4 5 1 7z" fill="#2a9080" stroke="#0c5048"/></svg></button>
          <button aria-label="显示切削区域" class="flex h-[26px] w-[26px] items-center justify-center border border-[#b8b8b8] bg-white"><svg class="h-5 w-5"><use href="#torch"/></svg></button></div>
        <div class="flex h-[26px] items-center gap-[2px]"><span class="flex-1 pt-[4px]">指定修剪边界</span>
          <button aria-label="选择修剪边界" class="flex h-[26px] w-[26px] items-center justify-center border border-[#b8b8b8] bg-white"><svg class="h-5 w-5" viewBox="0 0 20 20" fill="none"><path d="M2 5V1.500H18V6H12M2 5H7M2 14V18.500H18V14H14M2 14H6" stroke="#1a28b8" stroke-width="1.300"/><path d="M2 11L5 6L9 8L12 3L17 4L14 9L18 12L16 16M4 14L8 12L10 15" stroke="#e030d8" stroke-width="1.600" stroke-dasharray="3 1"/><path d="M6 6L14 14M14 6L6 14" stroke="#222" stroke-width="1.500"/></svg></button>
          <button aria-label="显示修剪边界" class="flex h-[26px] w-[26px] items-center justify-center border border-[#ccc] bg-white"><svg class="h-5 w-5"><use href="#torch-off"/></svg></button></div>
      </div>
    </section>

    <section class="border-b-2 border-[#cfcfcf] bg-white pb-[5px]">
      <button class="flex h-[24px] w-full items-start justify-between pt-[2px] pr-[5px] pl-[6px] text-[11px] leading-[17px] text-[#3290bd]">工具<svg class="mt-[4px] h-[9px] w-[10px]"><use href="#up"/></svg></button>
      <div class="grid gap-[2px] pr-[8px] pl-[7px]">
        <div class="flex h-[26px] items-start gap-[2px]"><label for="tool" class="flex-1 leading-[20px]">刀具</label>
          <div class="relative w-[96px]"><select id="tool" class="h-[21px] w-full appearance-none overflow-hidden border border-[#aaa] bg-white pr-[14px] pl-[3px]"><option>D6R0.5 (铣刀-5 参数)</option></select><svg class="pointer-events-none absolute top-[9px] right-[4px] h-[4px] w-[7px]"><use href="#caret"/></svg></div>
          <button aria-label="新建刀具" class="flex h-[26px] w-[26px] items-center justify-center border border-[#b8b8b8] bg-white"><svg class="h-5 w-5" viewBox="0 0 20 20"><path d="M2 10L8 7V17L5 19L2 18z" fill="#234ac0" stroke="#0d2268"/><path d="M2 15L8 10M3 18L8 14" stroke="#dce6ff" stroke-width="1.300"/><path d="M13 1H18V12H13z" fill="#6d7078" stroke="#333" stroke-width=".8"/><path d="M15 1V11" stroke="#ddd"/><path d="M10 11L14 8L18 11V16L12 18L10 16z" fill="#e8a92a" stroke="#7d520f"/><circle cx="14" cy="13" r="1.300" fill="#fff"/><use href="#spark" x="1" y="0" width="10" height="10"/></svg></button>
          <button aria-label="编辑刀具" class="flex h-[26px] w-[26px] items-center justify-center border border-[#b8b8b8] bg-white"><svg class="h-5 w-5" viewBox="0 0 20 20"><path d="M1 4L5 2L8 5L5 9L1 7zM10 12L16 10L19 14L17 19L11 18z" fill="#2049c8" stroke="#0b1f70"/><ellipse cx="16.500" cy="16" rx="3" ry="2" transform="rotate(-40 16.5 16)" fill="#ffe83c"/><path d="M10 1Q7 3 9 6L4 11L1 11L3 15L6 14L7 17L9 14L8 12L12 9Q16 12 18 7L15 8L13 5L14 2L12 4z" fill="#f7d04a" stroke="#8a5f10" stroke-width=".8"/></svg></button></div>
        <button class="flex h-[20px] items-center justify-between border border-[#dbe3e3] bg-[#eff5f5] pr-[4px] pl-[7px] text-[#3290bd]">输出<svg class="h-[8px] w-[9px]"><use href="#down"/></svg></button>
        <button class="flex h-[20px] items-center justify-between border border-[#dbe3e3] bg-[#eff5f5] pr-[4px] pl-[7px] text-[#3290bd]">换刀设置<svg class="h-[8px] w-[9px]"><use href="#down"/></svg></button>
      </div>
    </section>

    <section class="border-b-2 border-[#cfcfcf] bg-white"><button class="flex h-[17px] w-full items-start justify-between pt-[2px] pr-[5px] pl-[6px] text-[11px] leading-[15px] text-[#3290bd]">刀轴<svg class="mt-[3px] h-[9px] w-[10px]"><use href="#down"/></svg></button></section>

    <section class="border-b-2 border-[#cfcfcf] bg-white pb-[7px]">
      <button class="flex h-[25px] w-full items-start justify-between pt-[2px] pr-[5px] pl-[6px] text-[11px] leading-[17px] text-[#3290bd]">刀轨设置<svg class="mt-[4px] h-[9px] w-[10px]"><use href="#up"/></svg></button>
      <div class="grid gap-[2px] pr-[8px] pl-[7px]">
        <div class="flex h-[26px] items-start gap-[2px]"><label for="method" class="flex-1 leading-[20px]">方法</label>
          <div class="relative w-[96px]"><select id="method" class="h-[21px] w-full appearance-none border border-[#aaa] bg-white pl-[3px]"><option>METHOD</option></select><svg class="pointer-events-none absolute top-[9px] right-[4px] h-[4px] w-[7px]"><use href="#caret"/></svg></div>
          <button aria-label="新建方法" class="flex h-[26px] w-[26px] items-center justify-center border border-[#b8b8b8] bg-white"><svg class="h-5 w-5" viewBox="0 0 20 20"><path d="M1 9V19H19V6L16 9L13 8L10 11L7 9z" fill="#fff" stroke="#1f5f9c" stroke-width="1.300"/><path d="M2 14L4 12L6 14L8 12L10 14L12 12L14 14L16 12L18 14M2 17L4 15L6 17L8 15L10 17L12 15L14 17L16 15L18 17" fill="none" stroke="#1f5f9c" stroke-width="1.300"/><use href="#spark" x="1" y="0" width="10" height="10"/></svg></button>
          <button aria-label="编辑方法" class="flex h-[26px] w-[26px] items-center justify-center border border-[#ccc] bg-white"><svg class="h-5 w-5" viewBox="0 0 20 20"><path d="M12 1Q8 3 10 8L7 11Q2 10 1 15L4 14L6 16L5 19Q10 18 9 13L12 10Q18 11 19 5L16 7L13 5L14 1z" fill="#c4c4c0" stroke="#aaa"/></svg></button></div>
        <div class="flex h-[20px] items-center"><label for="steep" class="flex-1">陡峭空间范围</label>
          <div class="relative w-[116px]"><select id="steep" class="h-[20px] w-full appearance-none border border-[#aaa] bg-white pl-[3px]"><option>无</option></select><svg class="pointer-events-none absolute top-[8px] right-[4px] h-[4px] w-[7px]"><use href="#caret"/></svg></div></div>
        <div class="flex h-[20px] items-center gap-px"><label for="merge" class="flex-1">合并距离</label>
          <div class="h-[19px] w-[68px] border border-[#aaa] bg-white p-[2px]"><input id="merge" value="3.00000" class="block h-full w-full bg-[#3399ff] pl-[16px] font-['Liberation_Mono',monospace] text-[12px] text-white"></div>
          <div class="relative w-[52px]"><select aria-label="合并距离单位" class="h-[20px] w-full appearance-none border border-[#aaa] bg-white pl-[3px]"><option>mm</option></select><svg class="pointer-events-none absolute top-[8px] right-[4px] h-[4px] w-[7px]"><use href="#caret"/></svg></div></div>
        <div class="flex h-[20px] items-center gap-px"><label for="minlen" class="flex-1">最小切削长度</label>
          <div class="h-[19px] w-[68px] border border-[#aaa] bg-white p-[2px]"><input id="minlen" value="1.00000" class="block h-full w-full pl-[16px] font-['Liberation_Mono',monospace] text-[12px]"></div>
          <div class="relative w-[52px]"><select aria-label="最小切削长度单位" class="h-[20px] w-full appearance-none border border-[#aaa] bg-white pl-[3px]"><option>mm</option></select><svg class="pointer-events-none absolute top-[8px] right-[4px] h-[4px] w-[7px]"><use href="#caret"/></svg></div></div>
        <div class="flex h-[20px] items-center"><label for="depth" class="flex-1">公共每刀切削深度</label>
          <div class="relative w-[116px]"><select id="depth" class="h-[20px] w-full appearance-none border border-[#aaa] bg-white pl-[3px]"><option>恒定</option></select><svg class="pointer-events-none absolute top-[8px] right-[4px] h-[4px] w-[7px]"><use href="#caret"/></svg></div></div>
        <div class="flex h-[20px] items-center gap-px"><label for="maxd" class="flex-1">最大距离</label>
          <div class="h-[19px] w-[68px] border border-[#aaa] bg-white p-[2px]"><input id="maxd" value="0.15000" class="block h-full w-full pl-[16px] font-['Liberation_Mono',monospace] text-[12px]"></div>
          <div class="relative w-[52px]"><select aria-label="最大距离单位" class="h-[20px] w-full appearance-none border border-[#aaa] bg-white pl-[3px]"><option>mm</option></select><svg class="pointer-events-none absolute top-[8px] right-[4px] h-[4px] w-[7px]"><use href="#caret"/></svg></div></div>
      </div>
      <div class="mt-[3px] grid gap-[2px] pr-[8px] pl-[7px]">
        <div class="flex h-[26px] items-center"><span class="flex-1">切削层</span><button aria-label="切削层" class="flex h-[26px] w-[26px] items-center justify-center border border-[#b8b8b8] bg-white"><svg class="h-5 w-5" viewBox="0 0 20 20"><path d="M1 2H12M1 5H10M1 8H11M1 11H9M1 14H12M1 18H12" stroke="#111" stroke-width="1.800"/><path d="M19 1L12 6L14 8L10 13L18 7L16 5z" fill="#f6d72c" stroke="#6e5d10" stroke-width=".8"/></svg></button></div>
        <div class="flex h-[26px] items-center"><span class="flex-1">切削参数</span><button aria-label="切削参数" class="flex h-[26px] w-[26px] items-center justify-center border border-[#b8b8b8] bg-white"><svg class="h-5 w-5" viewBox="0 0 20 20"><path d="M3 5H14" stroke="#1628c8"/><path d="M17 5L13 3V7z" fill="#1628c8"/><rect x="1.500" y="9.500" width="17" height="9" fill="#fff" stroke="#111" stroke-width="1.200"/><path d="M3 17L8 12M7 17L12 12M11 17L16 12" stroke="#1a2c88" stroke-width="1.200"/></svg></button></div>
        <div class="flex h-[26px] items-center"><span class="flex-1">非切削移动</span><button aria-label="非切削移动" class="flex h-[26px] w-[26px] items-center justify-center border border-[#b8b8b8] bg-white"><svg class="h-5 w-5" viewBox="0 0 20 20"><path d="M6 2.500H16M2 3V7M18 4V8" stroke="#c81818"/><path d="M4 2.500L8 0V5zM2 10L0 6H4zM18 2L16 5.500H20z" fill="#c81818"/><rect x="1.500" y="10.500" width="17" height="8" fill="#fff" stroke="#111" stroke-width="1.200"/><path d="M3 17L8 12M7 17L12 12M11 17L16 12" stroke="#1a2c88" stroke-width="1.200"/></svg></button></div>
        <div class="flex h-[26px] items-center"><span class="flex-1">进给率和速度</span><button aria-label="进给率和速度" class="flex h-[26px] w-[26px] items-center justify-center border border-[#b8b8b8] bg-white"><svg class="h-5 w-5" viewBox="0 0 20 20"><ellipse cx="7" cy="7" rx="6" ry="2.800" fill="none" stroke="#b82018" stroke-width="1.800"/><path d="M5 1H9V15H5z" fill="#2a3fa8" stroke="#131f68"/><path d="M5 4L9 2M5 8L9 6M5 12L9 10" stroke="#bcc8ff"/><path d="M9 5L14 6L11 10z" fill="#c82018"/><path d="M10 17V15M12 17H15" stroke="#2448d8" stroke-width="1.500"/><path d="M20 16.500L16 13V15H14V18H16V20z" fill="#3a62e8"/></svg></button></div>
      </div>
    </section>

    <section class="border-b-2 border-[#cfcfcf] bg-white"><button class="flex h-[17px] w-full items-start justify-between pt-[2px] pr-[5px] pl-[6px] text-[11px] leading-[15px] text-[#3290bd]">机床控制<svg class="mt-[3px] h-[9px] w-[10px]"><use href="#down"/></svg></button></section>
    <section class="border-b-2 border-[#cfcfcf] bg-white"><button class="flex h-[17px] w-full items-start justify-between pt-[2px] pr-[5px] pl-[6px] text-[11px] leading-[15px] text-[#3290bd]">程序<svg class="mt-[3px] h-[9px] w-[10px]"><use href="#down"/></svg></button></section>
    <section class="border-b-2 border-[#cfcfcf] bg-white"><button class="flex h-[17px] w-full items-start justify-between pt-[2px] pr-[5px] pl-[6px] text-[11px] leading-[15px] text-[#3290bd]">描述<svg class="mt-[3px] h-[9px] w-[10px]"><use href="#down"/></svg></button></section>
    <section class="border-b-2 border-[#cfcfcf] bg-white"><button class="flex h-[17px] w-full items-start justify-between pt-[2px] pr-[5px] pl-[6px] text-[11px] leading-[15px] text-[#3290bd]">选项<svg class="mt-[3px] h-[9px] w-[10px]"><use href="#down"/></svg></button></section>
    <section class="bg-white">
      <button class="flex h-[25px] w-full items-start justify-between pt-[2px] pr-[5px] pl-[6px] text-[11px] leading-[17px] text-[#3290bd]">操作<svg class="mt-[4px] h-[9px] w-[10px]"><use href="#up"/></svg></button>
      <div class="flex gap-[2px] pl-[75px]">
        <button aria-label="生成" class="flex h-[26px] w-[26px] items-center justify-center border border-[#b8b8b8] bg-white"><svg class="h-5 w-5" viewBox="0 0 20 20"><path d="M3 2H7V11H3z" fill="#2a3fa8"/><path d="M9 6H19" stroke="#222" stroke-width="1.500"/></svg></button>
        <button aria-label="重播" class="flex h-[26px] w-[26px] items-center justify-center border border-[#b8b8b8] bg-white"><svg class="h-5 w-5" viewBox="0 0 20 20"><path d="M2 13V3H8M2 7H7" fill="none" stroke="#222" stroke-width="1.500"/></svg></button>
        <button aria-label="确认" class="flex h-[26px] w-[26px] items-center justify-center border border-[#b8b8b8] bg-white"><svg class="h-5 w-5" viewBox="0 0 20 20"><path d="M1 4L4 8L10 1" fill="none" stroke="#22a830" stroke-width="2.500"/><path d="M12 3H16V11H12z" fill="#2a3fa8"/></svg></button>
        <button aria-label="列表" class="flex h-[26px] w-[26px] items-center justify-center border border-[#b8b8b8] bg-white"><svg class="h-5 w-5" viewBox="0 0 20 20"><path d="M2 13V3H8M2 7H7" fill="none" stroke="#222" stroke-width="1.500"/><path d="M11 2Q16 3 15 9" fill="none" stroke="#d87828" stroke-width="2.500"/></svg></button>
      </div>
    </section>
  </div>
</section>

<!-- tutorial annotations -->
<svg class="pointer-events-none absolute top-0 left-0 z-10 h-[734px] w-[796px]" viewBox="0 0 796 734" fill="#fc3b3a" aria-hidden="true">
  <path transform="translate(281 68) rotate(12)" d="M0 0L16-7L14-3.500L110-.5V.5L14 3.500L16 7z"/>
  <path transform="translate(313 153) rotate(19)" d="M0 0L16-7L14-3.500L88-.5V.5L14 3.500L16 7z"/>
  <path transform="translate(297 244) rotate(31)" d="M0 0L16-7L14-3.500L98-.5V.5L14 3.500L16 7z"/>
  <path transform="translate(302 480) rotate(24)" d="M0 0L16-7L14-3.500L110-.5V.5L14 3.500L16 7z"/>
  <path transform="translate(321 550) rotate(34)" d="M0 0L16-7L14-3.500L85-.5V.5L14 3.500L16 7z"/>
  <path transform="translate(312 598) rotate(37)" d="M0 0L16-7L14-3.500L95-.5V.5L14 3.500L16 7z"/>
  <path transform="translate(146 723) rotate(-31)" d="M0 0L16-7L14-3.500L63-.3V.3L14 3.500L16 7z"/>
  <g><circle cx="397" cy="92" r="8.200"/><circle cx="406.500" cy="187" r="8.200"/><circle cx="389" cy="299.500" r="8.200"/><circle cx="414" cy="528" r="8.200"/><circle cx="397" cy="603.500" r="8.200"/><circle cx="397.500" cy="660.500" r="8.200"/></g>
  <g fill="#fff" font-size="10" text-anchor="middle"><text x="397" y="96">1</text><text x="406" y="191">2</text><text x="389" y="303">3</text><text x="414" y="532">4</text><text x="397" y="607">5</text><text x="397" y="664">6</text></g>
  <g fill="#0d0d0f"><path d="M422 183V191L418 187zM405 295V303L401 299zM430 524V532L426 528zM413 599V607L409 603zM413 656V664L409 660z"/></g>
</svg>
<p class="absolute top-[169px] left-[422px] z-10 rounded-[2px] bg-black/60 py-[5px] pr-[9px] pl-[5px] text-[20px] leading-[26px] whitespace-nowrap text-white">选择加工面</p>
<p class="absolute top-[281px] left-[405px] z-10 rounded-[2px] bg-black/60 py-[5px] pr-[9px] pl-[5px] text-[20px] leading-[26px] whitespace-nowrap text-white">选择刀具</p>
<p class="absolute top-[510px] left-[430px] z-10 rounded-[2px] bg-black/60 py-[5px] pr-[9px] pl-[5px] text-[20px] leading-[26px] whitespace-nowrap text-white">设置下刀量</p>
<p class="absolute top-[585px] left-[413px] z-10 rounded-[2px] bg-black/60 py-[5px] pr-[9px] pl-[5px] text-[20px] leading-[26px] whitespace-nowrap text-white">设置余量<br>进退刀</p>
<p class="absolute top-[642px] left-[413px] z-10 rounded-[2px] bg-black/60 py-[5px] pr-[9px] pl-[5px] text-[20px] leading-[26px] whitespace-nowrap text-white">进给和转速</p>
<p class="absolute top-[693px] left-[206px] z-10 text-[24px] leading-[32px] whitespace-nowrap text-[#fc3b3a]">参数设置好后点此生成刀路</p>

<!-- site badge -->
<div class="absolute top-[690px] left-[662px] z-10 flex h-[39px] w-[129px] items-center bg-[#a9a9aa] text-[#1c2c5e]">
  <svg class="h-[38px] w-[56px] shrink-0" viewBox="0 0 56 38">
    <path d="M3 26Q6 8 34 3Q54 1 54 11Q54 24 38 28Q50 20 49 12Q46 6 34 6Q14 9 7 22z" fill="#d8782a"/>
    <path d="M12 14Q0 24 3 30Q8 38 26 35Q36 33 42 28Q26 34 14 32Q6 28 12 14z" fill="#1c7fb4"/>
    <circle cx="22" cy="7" r="2.800" fill="#1f4fa8"/>
    <g class="font-['Liberation_Serif',serif]" font-size="25" font-style="italic"><text x="12" y="29" fill="#1f4fa8" stroke="#1f4fa8" stroke-width=".5">X</text><text x="29" y="29" fill="#c8502c" stroke="#c8502c" stroke-width=".5">S</text></g>
  </svg>
  <div class="leading-none whitespace-nowrap"><div class="text-[22px] leading-[24px] font-black">资料网</div><div class="font-['DejaVu_Sans_Mono',monospace] text-[9px] leading-[13px] font-bold">ZL.XS1616.COM</div></div>
</div>

<script>
  const body = document.getElementById('ops');
  for (let i = 0; i < 35; i++) {
    const icon = i === 3 || i === 5
      ? '<svg class="ml-[6px] block h-[12px] w-[7px]" viewBox="0 0 7 12"><rect width="7" height="12" fill="#3a3a9c"/><path d="M1 3L6 1M1 6L6 4M1 9L6 7" stroke="#aab"/><path d="M2.500 0V12" stroke="#8a8ad0"/></svg>' : '';
    body.insertAdjacentHTML('beforeend', i % 2
      ? '<tr class="h-[16px] border-b border-[#dedede] bg-[#f8f8f8]"><td class="border-r border-[#dedede] p-0">' + icon + '</td><td></td></tr>'
      : '<tr class="h-[17px] border-b border-[#dedede]"><td class="border-r border-[#dedede] p-0"></td><td></td></tr>');
  }
</script>
</body>
</html>
